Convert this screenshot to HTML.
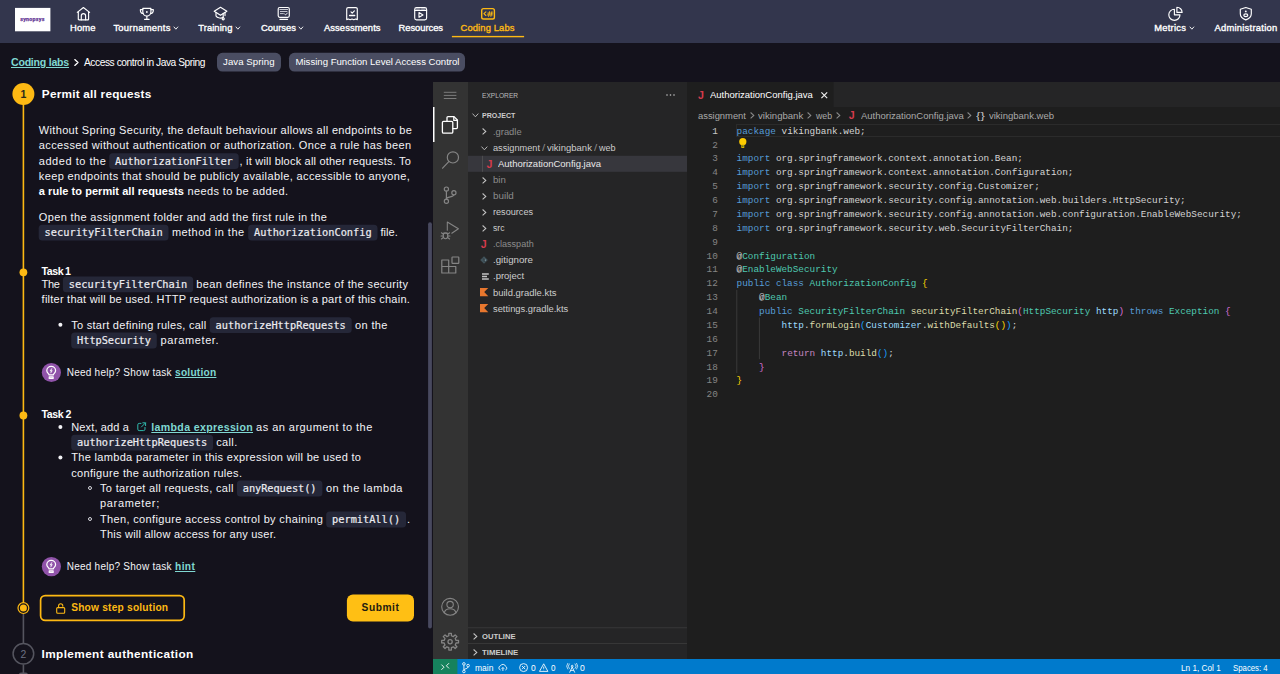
<!DOCTYPE html>
<html lang="en"><head><meta charset="utf-8"><title>Coding Labs - Access control in Java Spring</title>
<style>
html,body{margin:0;padding:0;}
html{overflow:hidden;width:1280px;height:674px;}
body{width:1280px;height:674px;overflow:hidden;background:#14121c;position:relative;font-family:"Liberation Sans",sans-serif;}
.b{position:absolute;box-sizing:border-box;}
.t{position:absolute;white-space:pre;margin:0;padding:0;}
svg{position:absolute;overflow:visible;}
</style></head><body>
<svg style="left:-1px;top:-1px" width="1282" height="45" viewBox="-1 -1 1282 45"><rect x="0" y="0" width="1280" height="43" fill="#33364d"/></svg>
<svg style="left:14px;top:6px" width="38" height="27" viewBox="14 6 38 27"><rect x="15" y="7.9" width="35.4" height="23.4" fill="#ffffff"/></svg>
<span class="t" id="t0" style='left:20.2px;top:16.20px;font:700 4.9px/7px "Liberation Sans", sans-serif;color:#5d2d91;letter-spacing:0.234px;-webkit-text-stroke:0.25px #5d2d91;'>synopsys</span>
<svg style="left:0;top:0" width="1280" height="44" viewBox="0 0 1280 44" fill="none" stroke="#ffffff" stroke-width="1.15" stroke-linecap="round" stroke-linejoin="round"><path d="M77.3 12.4 L83.4 7.5 L89.6 12.4"/><path d="M78.3 11.8 V19.2 A0.7 0.7 0 0 0 79 19.9 H87.9 A0.7 0.7 0 0 0 88.6 19.2 V11.8"/><path d="M81.3 19.8 V15.8 A2.15 2.15 0 0 1 85.6 15.8 V19.8"/></svg>
<svg style="left:0;top:0" width="1280" height="44" viewBox="0 0 1280 44" fill="none" stroke="#ffffff" stroke-width="1.15" stroke-linecap="round" stroke-linejoin="round"><path d="M142.8 8.3 H150.9 V12 A4.05 4.05 0 0 1 142.8 12 Z"/><path d="M142.8 9.6 H140.4 V10.8 A2.6 2.6 0 0 0 143.2 13.4"/><path d="M150.9 9.6 H153.3 V10.8 A2.6 2.6 0 0 1 150.5 13.4"/><path d="M146.85 16.2 V19"/><path d="M144.6 19.4 H149.1"/><circle cx="146.85" cy="12" r="0.9" fill="#fff" stroke="none"/></svg>
<svg style="left:0;top:0" width="1280" height="44" viewBox="0 0 1280 44" fill="none" stroke="#ffffff" stroke-width="1.15" stroke-linecap="round" stroke-linejoin="round"><path d="M214.2 11.3 L220.5 7.3 L226.9 11.3 L220.5 15.3 Z"/><path d="M216 12.6 V16 C217 18.2 222 18.8 223.2 17.2"/><path d="M225 12.6 V15.6"/><path d="M223.2 13.4 V17.6"/><circle cx="223.2" cy="18.8" r="1.05"/></svg>
<svg style="left:0;top:0" width="1280" height="44" viewBox="0 0 1280 44" fill="none" stroke="#ffffff" stroke-width="1.15" stroke-linecap="round" stroke-linejoin="round"><rect x="278.2" y="7.5" width="11.1" height="9.8" rx="1.5"/><path d="M279.8 9.5 H287.6 M280.4 11.5 H287 M280.4 13.6 H283.4" stroke-width="0.9" stroke="#d5d6de"/><path d="M284.6 14 L285.6 14.9 L287.4 13" stroke-width="0.9"/><path d="M279.9 19.3 H287.6"/></svg>
<svg style="left:0;top:0" width="1280" height="44" viewBox="0 0 1280 44" fill="none" stroke="#ffffff" stroke-width="1.15" stroke-linecap="round" stroke-linejoin="round"><path d="M346.7 19.6 V9 A1.4 1.4 0 0 1 348.1 7.6 H355.9 A1.4 1.4 0 0 1 357.3 9 V19.6 L355.6 19 L353.8 19.7 L352 19 L350.2 19.7 L348.4 19 Z"/><path d="M351 11.9 L352.2 13.1 L354.4 10.9"/><path d="M349.6 15.6 H354.6" stroke-width="1.5"/></svg>
<svg style="left:0;top:0" width="1280" height="44" viewBox="0 0 1280 44" fill="none" stroke="#ffffff" stroke-width="1.15" stroke-linecap="round" stroke-linejoin="round"><rect x="414.7" y="7.6" width="11.9" height="12.2" rx="1.8"/><path d="M414.7 10.3 H426.6"/><path d="M419 12.5 L423 14.9 L419 17.3 Z"/><path d="M416.4 9 H419.4 M421.6 9 H424.6" stroke="#b8bac6" stroke-width="0.9"/></svg>
<svg style="left:0;top:0" width="1280" height="44" viewBox="0 0 1280 44" fill="none" stroke="#fdb913" stroke-width="1.4" stroke-linecap="round" stroke-linejoin="round"><rect x="481.7" y="8.6" width="12.7" height="10.4" rx="1.8"/></svg>
<svg style="left:0;top:0" width="1280" height="44" viewBox="0 0 1280 44" fill="none" stroke="#fdb913" stroke-width="1.1" stroke-linecap="round" stroke-linejoin="round"><path d="M485.9 11.9 L483.9 13.7 L485.9 15.5"/><path d="M489.6 11.6 L488.6 16.4 M491.9 11.6 L490.9 16.4 M487.8 13.1 H492.8 M487.4 14.9 H492.4" stroke-width="0.9"/></svg>
<svg style="left:0;top:0" width="1280" height="44" viewBox="0 0 1280 44" fill="none" stroke="#ffffff" stroke-width="1.15" stroke-linecap="round" stroke-linejoin="round"><path d="M1174.4 9.2 A5.6 5.6 0 1 0 1180 14.8 H1174.4 Z"/><path d="M1176.9 7.2 A5.2 5.2 0 0 1 1182.1 12.4 H1176.9 Z"/></svg>
<svg style="left:0;top:0" width="1280" height="44" viewBox="0 0 1280 44" fill="none" stroke="#ffffff" stroke-width="1.15" stroke-linecap="round" stroke-linejoin="round"><path d="M1245.8 7.5 L1251.3 9.3 V13.8 C1251.3 16.8 1248.6 18.9 1245.8 19.9 C1243 18.9 1240.3 16.8 1240.3 13.8 V9.3 Z"/><circle cx="1245.8" cy="11.4" r="0.95" fill="#fff" stroke="none"/><ellipse cx="1245.8" cy="15.2" rx="2" ry="1.35"/></svg>
<span class="t" id="t1" style='left:70px;top:21.41px;font:400 9.4px/13px "Liberation Sans", sans-serif;color:#ffffff;letter-spacing:0.161px;-webkit-text-stroke:0.35px #ffffff;'>Home</span>
<span class="t" id="t2" style='left:113.4px;top:21.41px;font:400 9.4px/13px "Liberation Sans", sans-serif;color:#ffffff;letter-spacing:0.280px;-webkit-text-stroke:0.35px #ffffff;'>Tournaments</span>
<svg style="left:173.5px;top:27.4px" width="3.8" height="2.2" viewBox="0 0 3.8 2.2"><path d="M0 0 L1.9 2.2 L3.8 0" fill="none" stroke="#ffffff" stroke-width="0.9" stroke-linecap="round" stroke-linejoin="round"/></svg>
<span class="t" id="t3" style='left:198.2px;top:21.41px;font:400 9.4px/13px "Liberation Sans", sans-serif;color:#ffffff;letter-spacing:0.096px;-webkit-text-stroke:0.35px #ffffff;'>Training</span>
<svg style="left:236.4px;top:27.4px" width="3.8" height="2.2" viewBox="0 0 3.8 2.2"><path d="M0 0 L1.9 2.2 L3.8 0" fill="none" stroke="#ffffff" stroke-width="0.9" stroke-linecap="round" stroke-linejoin="round"/></svg>
<span class="t" id="t4" style='left:261px;top:21.41px;font:400 9.4px/13px "Liberation Sans", sans-serif;color:#ffffff;letter-spacing:0.013px;-webkit-text-stroke:0.35px #ffffff;'>Courses</span>
<svg style="left:299.2px;top:27.4px" width="3.8" height="2.2" viewBox="0 0 3.8 2.2"><path d="M0 0 L1.9 2.2 L3.8 0" fill="none" stroke="#ffffff" stroke-width="0.9" stroke-linecap="round" stroke-linejoin="round"/></svg>
<span class="t" id="t5" style='left:324px;top:21.41px;font:400 9.4px/13px "Liberation Sans", sans-serif;color:#ffffff;letter-spacing:0.075px;-webkit-text-stroke:0.35px #ffffff;'>Assessments</span>
<span class="t" id="t6" style='left:398.5px;top:21.41px;font:400 9.4px/13px "Liberation Sans", sans-serif;color:#ffffff;letter-spacing:-0.039px;-webkit-text-stroke:0.35px #ffffff;'>Resources</span>
<span class="t" id="t7" style='left:460.5px;top:21.41px;font:400 9.4px/13px "Liberation Sans", sans-serif;color:#fdb913;letter-spacing:0.134px;-webkit-text-stroke:0.35px #fdb913;'>Coding Labs</span>
<svg style="left:450px;top:34px" width="76" height="5" viewBox="450 34 76 5"><rect x="451.9" y="35.9" width="72.2" height="1.4" fill="#fdb913"/></svg>
<span class="t" id="t8" style='left:1154.2px;top:21.41px;font:400 9.4px/13px "Liberation Sans", sans-serif;color:#ffffff;letter-spacing:0.264px;-webkit-text-stroke:0.35px #ffffff;'>Metrics</span>
<svg style="left:1189.8px;top:27.4px" width="3.8" height="2.2" viewBox="0 0 3.8 2.2"><path d="M0 0 L1.9 2.2 L3.8 0" fill="none" stroke="#ffffff" stroke-width="0.9" stroke-linecap="round" stroke-linejoin="round"/></svg>
<span class="t" id="t9" style='left:1214.4px;top:21.41px;font:400 9.4px/13px "Liberation Sans", sans-serif;color:#ffffff;letter-spacing:0.261px;-webkit-text-stroke:0.35px #ffffff;'>Administration</span>
<span class="t" id="t10" style='left:11px;top:54.61px;font:700 10.6px/15px "Liberation Sans", sans-serif;color:#80d8d2;letter-spacing:-0.242px;text-decoration:underline;text-decoration-thickness:1px;text-underline-offset:0.6px;'>Coding labs</span>
<svg style="left:74.3px;top:58.8px" width="5" height="7" viewBox="0 0 5 7"><path d="M0.8 0.6 L4 3.5 L0.8 6.4" fill="none" stroke="#fff" stroke-width="1.3" stroke-linecap="round" stroke-linejoin="round"/></svg>
<span class="t" id="t11" style='left:84px;top:55.61px;font:400 10.2px/14px "Liberation Sans", sans-serif;color:#ffffff;letter-spacing:-0.434px;'>Access control in Java Spring</span>
<svg style="left:216px;top:51px" width="66" height="22" viewBox="216 51 66 22"><rect x="217" y="52.8" width="64" height="18.7" rx="5.5" fill="#4a4d62"/></svg>
<span class="t" id="t12" style='left:223px;top:55.41px;font:400 9.6px/13px "Liberation Sans", sans-serif;color:#ffffff;letter-spacing:0.083px;'>Java Spring</span>
<svg style="left:288px;top:51px" width="178" height="22" viewBox="288 51 178 22"><rect x="289" y="52.8" width="176" height="18.7" rx="5.5" fill="#4a4d62"/></svg>
<span class="t" id="t13" style='left:295.5px;top:55.41px;font:400 9.6px/13px "Liberation Sans", sans-serif;color:#ffffff;letter-spacing:-0.007px;'>Missing Function Level Access Control</span>
<svg style="left:21px;top:93px" width="5" height="511" viewBox="21 93 5 511"><rect x="22.6" y="94" width="1.6" height="509" fill="#fdb913"/></svg>
<svg style="left:21px;top:612px" width="5" height="33" viewBox="21 612 5 33"><rect x="22.6" y="613.5" width="1.6" height="30" fill="#55555f"/></svg>
<svg style="left:21px;top:663px" width="5" height="12" viewBox="21 663 5 12"><rect x="22.6" y="664.5" width="1.6" height="9.5" fill="#55555f"/></svg>
<svg style="left:17px;top:671px" width="13" height="9" viewBox="17 671 13 9"><rect x="18.6" y="672.6" width="9.6" height="6" rx="3" fill="#55555f"/></svg>
<svg style="left:11px;top:82px" width="25" height="24" viewBox="11 82 25 24"><rect x="12.4" y="83" width="22" height="22" rx="11" fill="#fdb913"/></svg>
<span class="t" id="t14" style='left:20.6px;top:87.00px;font:700 10.5px/15px "Liberation Sans", sans-serif;color:#2a2a1a;'>1</span>
<span class="t" id="t15" style='left:41.8px;top:86.20px;font:700 11.8px/17px "Liberation Sans", sans-serif;color:#ffffff;letter-spacing:0.219px;'>Permit all requests</span>
<span class="t" id="t16" style='left:38.8px;top:123.11px;font:400 11.0px/15px "Liberation Sans", sans-serif;color:#f3f3f6;letter-spacing:0.334px;'>Without Spring Security, the default behaviour allows all endpoints to be</span>
<span class="t" id="t17" style='left:38.8px;top:138.41px;font:400 11.0px/15px "Liberation Sans", sans-serif;color:#f3f3f6;letter-spacing:0.380px;'>accessed without authentication or authorization. Once a rule has been</span>
<span class="t" id="t18" style='left:38.8px;top:153.61px;font:400 11.0px/15px "Liberation Sans", sans-serif;color:#f3f3f6;letter-spacing:0.539px;'>added to the</span>
<svg style="left:108px;top:152px" width="132" height="19" viewBox="108 152 132 19"><rect x="109.2" y="153.2" width="129.5" height="15.9" rx="3.5" fill="#252738"/></svg>
<span class="t" id="t19" style='left:115.10000000000001px;top:153.50px;font:400 10.3px/14px "DejaVu Sans Mono", "Liberation Mono", monospace;color:#ececf1;letter-spacing:-0.005px;-webkit-text-stroke:0.2px #ececf1;'>AuthorizationFilter</span>
<span class="t" id="t20" style='left:239.6px;top:153.61px;font:400 11.0px/15px "Liberation Sans", sans-serif;color:#f3f3f6;letter-spacing:0.204px;'>, it will block all other requests. To</span>
<span class="t" id="t21" style='left:38.8px;top:168.91px;font:400 11.0px/15px "Liberation Sans", sans-serif;color:#f3f3f6;letter-spacing:0.373px;'>keep endpoints that should be publicly available, accessible to anyone,</span>
<span class="t" id="t22" style='left:38.8px;top:184.31px;font:700 11.0px/15px "Liberation Sans", sans-serif;color:#ffffff;letter-spacing:0.052px;'>a rule to permit all requests</span>
<span class="t" id="t23" style='left:187.4px;top:184.31px;font:400 11.0px/15px "Liberation Sans", sans-serif;color:#f3f3f6;letter-spacing:0.382px;'>needs to be added.</span>
<span class="t" id="t24" style='left:38.8px;top:209.91px;font:400 11.0px/15px "Liberation Sans", sans-serif;color:#f3f3f6;letter-spacing:0.357px;'>Open the assignment folder and add the first rule in the</span>
<svg style="left:37px;top:223px" width="133" height="19" viewBox="37 223 133 19"><rect x="38.7" y="224.7" width="129.8" height="15.9" rx="3.5" fill="#252738"/></svg>
<span class="t" id="t25" style='left:44.6px;top:225.00px;font:400 10.3px/14px "DejaVu Sans Mono", "Liberation Mono", monospace;color:#ececf1;letter-spacing:0.011px;-webkit-text-stroke:0.2px #ececf1;'>securityFilterChain</span>
<span class="t" id="t26" style='left:171.9px;top:225.11px;font:400 11.0px/15px "Liberation Sans", sans-serif;color:#f3f3f6;letter-spacing:0.462px;'>method in the</span>
<svg style="left:247px;top:223px" width="132" height="19" viewBox="247 223 132 19"><rect x="248.2" y="224.7" width="129.3" height="15.9" rx="3.5" fill="#252738"/></svg>
<span class="t" id="t27" style='left:254.1px;top:225.00px;font:400 10.3px/14px "DejaVu Sans Mono", "Liberation Mono", monospace;color:#ececf1;letter-spacing:-0.016px;-webkit-text-stroke:0.2px #ececf1;'>AuthorizationConfig</span>
<span class="t" id="t28" style='left:380.5px;top:225.11px;font:400 11.0px/15px "Liberation Sans", sans-serif;color:#f3f3f6;letter-spacing:0.019px;'>file.</span>
<svg style="left:18px;top:267px" width="11" height="11" viewBox="18 267 11 11"><rect x="19.5" y="268.4" width="7.8" height="7.8" rx="3.9" fill="#fdb913"/></svg>
<span class="t" id="t29" style='left:41.6px;top:263.91px;font:700 10.6px/15px "Liberation Sans", sans-serif;color:#ffffff;letter-spacing:-0.458px;'>Task</span>
<span class="t" id="t30" style='left:65.0px;top:263.91px;font:700 10.6px/15px "Liberation Sans", sans-serif;color:#ffffff;'>1</span>
<span class="t" id="t31" style='left:41.6px;top:276.81px;font:400 11.0px/15px "Liberation Sans", sans-serif;color:#f3f3f6;letter-spacing:-0.384px;'>The</span>
<svg style="left:61px;top:275px" width="134" height="19" viewBox="61 275 134 19"><rect x="62.9" y="276.4" width="130.3" height="15.9" rx="3.5" fill="#252738"/></svg>
<span class="t" id="t32" style='left:68.8px;top:276.71px;font:400 10.3px/14px "DejaVu Sans Mono", "Liberation Mono", monospace;color:#ececf1;letter-spacing:0.039px;-webkit-text-stroke:0.2px #ececf1;'>securityFilterChain</span>
<span class="t" id="t33" style='left:196.3px;top:276.81px;font:400 11.0px/15px "Liberation Sans", sans-serif;color:#f3f3f6;letter-spacing:0.370px;'>bean defines the instance of the security</span>
<span class="t" id="t34" style='left:41.6px;top:292.00px;font:400 11.0px/15px "Liberation Sans", sans-serif;color:#f3f3f6;letter-spacing:0.238px;'>filter that will be used. HTTP request authorization is a part of this chain.</span>
<svg style="left:57px;top:321px" width="7" height="7" viewBox="57 321 7 7"><rect x="58.4" y="322.8" width="4" height="4" rx="2" fill="#f3f3f6"/></svg>
<span class="t" id="t35" style='left:71.2px;top:317.61px;font:400 11.0px/15px "Liberation Sans", sans-serif;color:#f3f3f6;letter-spacing:0.283px;'>To start defining rules, call</span>
<svg style="left:208px;top:316px" width="145" height="19" viewBox="208 316 145 19"><rect x="209.7" y="317.2" width="142" height="15.9" rx="3.5" fill="#252738"/></svg>
<span class="t" id="t36" style='left:215.6px;top:317.50px;font:400 10.3px/14px "DejaVu Sans Mono", "Liberation Mono", monospace;color:#ececf1;letter-spacing:0.001px;-webkit-text-stroke:0.2px #ececf1;'>authorizeHttpRequests</span>
<span class="t" id="t37" style='left:355.1px;top:317.61px;font:400 11.0px/15px "Liberation Sans", sans-serif;color:#f3f3f6;letter-spacing:0.341px;'>on the</span>
<svg style="left:70px;top:331px" width="88" height="19" viewBox="70 331 88 19"><rect x="71.2" y="332.5" width="85.6" height="15.9" rx="3.5" fill="#252738"/></svg>
<span class="t" id="t38" style='left:77.10000000000001px;top:332.81px;font:400 10.3px/14px "DejaVu Sans Mono", "Liberation Mono", monospace;color:#ececf1;letter-spacing:-0.055px;-webkit-text-stroke:0.2px #ececf1;'>HttpSecurity</span>
<span class="t" id="t39" style='left:160.5px;top:332.91px;font:400 11.0px/15px "Liberation Sans", sans-serif;color:#f3f3f6;letter-spacing:0.612px;'>parameter.</span>
<svg style="left:40px;top:361px" width="22" height="23" viewBox="40 361 22 23"><rect x="41.8" y="362.9" width="19.2" height="19.2" rx="9.6" fill="#9053a9"/></svg>
<svg style="left:46.1px;top:365.9px" width="10.4" height="13.2" viewBox="0 0 10.4 13.2" fill="none" stroke="#fff" stroke-width="1.25" stroke-linecap="round" stroke-linejoin="round"><path d="M3.1 9 C3.1 7.6 0.8 6.9 0.8 4.7 A4.4 4.4 0 0 1 9.6 4.7 C9.6 6.9 7.3 7.6 7.3 9 Z"/><path d="M3.2 10.9 H7.2 V12.4 H3.2 Z" stroke-width="1.1"/><path d="M5.7 2.6 L4 5.1 H5.2 L4.7 7.2 L6.4 4.6 H5.2 Z" fill="#fff" stroke-width="0.4"/></svg>
<span class="t" id="t40" style='left:66.7px;top:365.81px;font:400 10.0px/14px "Liberation Sans", sans-serif;color:#f3f3f6;letter-spacing:0.249px;'>Need help? Show task</span>
<span class="t" id="t41" style='left:175px;top:365.80px;font:700 10.2px/14px "Liberation Sans", sans-serif;color:#80d8d2;letter-spacing:0.225px;text-decoration:underline;text-decoration-thickness:1px;text-underline-offset:0.6px;'>solution</span>
<svg style="left:18px;top:410px" width="11" height="11" viewBox="18 410 11 11"><rect x="19.5" y="411.6" width="7.8" height="7.8" rx="3.9" fill="#fdb913"/></svg>
<span class="t" id="t42" style='left:41.6px;top:407.00px;font:700 10.6px/15px "Liberation Sans", sans-serif;color:#ffffff;letter-spacing:-0.458px;'>Task</span>
<span class="t" id="t43" style='left:65.6px;top:407.00px;font:700 10.6px/15px "Liberation Sans", sans-serif;color:#ffffff;'>2</span>
<svg style="left:57px;top:424px" width="7" height="6" viewBox="57 424 7 6"><rect x="58.4" y="425" width="4" height="4" rx="2" fill="#f3f3f6"/></svg>
<span class="t" id="t44" style='left:71.2px;top:419.91px;font:400 11.0px/15px "Liberation Sans", sans-serif;color:#f3f3f6;letter-spacing:0.143px;'>Next, add a</span>
<svg style="left:136.6px;top:422.4px" width="9.4" height="9.4" viewBox="0 0 9.4 9.4" fill="none" stroke="#2fb8ac" stroke-width="1" stroke-linecap="round" stroke-linejoin="round"><path d="M4 1.4 H2.2 A1.4 1.4 0 0 0 0.8 2.8 V7.2 A1.4 1.4 0 0 0 2.2 8.6 H6.6 A1.4 1.4 0 0 0 8 7.2 V5.4"/><path d="M5.8 0.8 H8.6 V3.6"/><path d="M8.4 1 L4.4 5"/></svg>
<span class="t" id="t45" style='left:151.3px;top:419.91px;font:700 10.6px/15px "Liberation Sans", sans-serif;color:#80d8d2;letter-spacing:0.338px;text-decoration:underline;text-decoration-thickness:1px;text-underline-offset:0.6px;'>lambda expression</span>
<span class="t" id="t46" style='left:256.1px;top:419.91px;font:400 11.0px/15px "Liberation Sans", sans-serif;color:#f3f3f6;letter-spacing:0.459px;'>as an argument to the</span>
<svg style="left:70px;top:433px" width="145" height="19" viewBox="70 433 145 19"><rect x="71.2" y="434.7" width="141.9" height="15.9" rx="3.5" fill="#252738"/></svg>
<span class="t" id="t47" style='left:77.10000000000001px;top:435.00px;font:400 10.3px/14px "DejaVu Sans Mono", "Liberation Mono", monospace;color:#ececf1;letter-spacing:-0.004px;-webkit-text-stroke:0.2px #ececf1;'>authorizeHttpRequests</span>
<span class="t" id="t48" style='left:216.2px;top:435.11px;font:400 11.0px/15px "Liberation Sans", sans-serif;color:#f3f3f6;letter-spacing:0.359px;'>call.</span>
<svg style="left:57px;top:454px" width="7" height="7" viewBox="57 454 7 7"><rect x="58.4" y="455.6" width="4" height="4" rx="2" fill="#f3f3f6"/></svg>
<span class="t" id="t49" style='left:71.2px;top:450.41px;font:400 11.0px/15px "Liberation Sans", sans-serif;color:#f3f3f6;letter-spacing:0.328px;'>The lambda parameter in this expression will be used to</span>
<span class="t" id="t50" style='left:71.2px;top:465.61px;font:400 11.0px/15px "Liberation Sans", sans-serif;color:#f3f3f6;letter-spacing:0.339px;'>configure the authorization rules.</span>
<div class="b" style="left:87.8px;top:485.8px;width:4.2px;height:4.2px;border-radius:50%;border:1px solid #d8d8de;"></div>
<span class="t" id="t51" style='left:100px;top:481.00px;font:400 11.0px/15px "Liberation Sans", sans-serif;color:#f3f3f6;letter-spacing:0.321px;'>To target all requests, call</span>
<svg style="left:235px;top:479px" width="89" height="19" viewBox="235 479 89 19"><rect x="236.9" y="480.6" width="85.5" height="15.9" rx="3.5" fill="#252738"/></svg>
<span class="t" id="t52" style='left:242.8px;top:480.91px;font:400 10.3px/14px "DejaVu Sans Mono", "Liberation Mono", monospace;color:#ececf1;letter-spacing:-0.064px;-webkit-text-stroke:0.2px #ececf1;'>anyRequest()</span>
<span class="t" id="t53" style='left:325.9px;top:481.00px;font:400 11.0px/15px "Liberation Sans", sans-serif;color:#f3f3f6;letter-spacing:0.573px;'>on the lambda</span>
<span class="t" id="t54" style='left:100px;top:496.41px;font:400 11.0px/15px "Liberation Sans", sans-serif;color:#f3f3f6;letter-spacing:0.666px;'>parameter;</span>
<div class="b" style="left:87.8px;top:516.6px;width:4.2px;height:4.2px;border-radius:50%;border:1px solid #d8d8de;"></div>
<span class="t" id="t55" style='left:100px;top:511.91px;font:400 11.0px/15px "Liberation Sans", sans-serif;color:#f3f3f6;letter-spacing:0.348px;'>Then, configure access control by chaining</span>
<svg style="left:325px;top:510px" width="82" height="19" viewBox="325 510 82 19"><rect x="326.2" y="511.5" width="79.8" height="15.9" rx="3.5" fill="#252738"/></svg>
<span class="t" id="t56" style='left:332.09999999999997px;top:511.81px;font:400 10.3px/14px "DejaVu Sans Mono", "Liberation Mono", monospace;color:#ececf1;letter-spacing:-0.020px;-webkit-text-stroke:0.2px #ececf1;'>permitAll()</span>
<span class="t" id="t57" style='left:406.9px;top:511.91px;font:400 11.0px/15px "Liberation Sans", sans-serif;color:#f3f3f6;'>.</span>
<span class="t" id="t58" style='left:100px;top:527.11px;font:400 11.0px/15px "Liberation Sans", sans-serif;color:#f3f3f6;letter-spacing:0.225px;'>This will allow access for any user.</span>
<svg style="left:40px;top:556px" width="22" height="22" viewBox="40 556 22 22"><rect x="41.8" y="557" width="19.2" height="19.2" rx="9.6" fill="#9053a9"/></svg>
<svg style="left:46.1px;top:560.0px" width="10.4" height="13.2" viewBox="0 0 10.4 13.2" fill="none" stroke="#fff" stroke-width="1.25" stroke-linecap="round" stroke-linejoin="round"><path d="M3.1 9 C3.1 7.6 0.8 6.9 0.8 4.7 A4.4 4.4 0 0 1 9.6 4.7 C9.6 6.9 7.3 7.6 7.3 9 Z"/><path d="M3.2 10.9 H7.2 V12.4 H3.2 Z" stroke-width="1.1"/><path d="M5.7 2.6 L4 5.1 H5.2 L4.7 7.2 L6.4 4.6 H5.2 Z" fill="#fff" stroke-width="0.4"/></svg>
<span class="t" id="t59" style='left:66.7px;top:559.91px;font:400 10.0px/14px "Liberation Sans", sans-serif;color:#f3f3f6;letter-spacing:0.249px;'>Need help? Show task</span>
<span class="t" id="t60" style='left:175px;top:559.91px;font:700 10.2px/14px "Liberation Sans", sans-serif;color:#80d8d2;letter-spacing:0.409px;text-decoration:underline;text-decoration-thickness:1px;text-underline-offset:0.6px;'>hint</span>
<svg style="left:0;top:590px" width="60" height="84" viewBox="0 590 60 84" fill="none"><circle cx="23.4" cy="608.1" r="5.4" stroke="#fdb913" stroke-width="1.2" fill="#14121c"/><circle cx="23.4" cy="653.8" r="10.3" stroke="#55555f" stroke-width="1.5"/></svg>
<svg style="left:18px;top:603px" width="10" height="10" viewBox="18 603 10 10"><rect x="19.9" y="604.6" width="7" height="7" rx="3.5" fill="#fdb913"/></svg>
<svg style="left:0;top:590px" width="200" height="84" viewBox="0 590 200 84" fill="none"><rect x="40.6" y="595.6" width="143.6" height="24.8" rx="4.6" stroke="#fdb913" stroke-width="1.7"/></svg>
<svg style="left:56px;top:602.6px" width="9.4" height="11" viewBox="0 0 9.4 11" fill="none" stroke="#fdb913" stroke-width="1.1" stroke-linecap="round" stroke-linejoin="round"><rect x="0.7" y="4.6" width="8" height="5.7" rx="1"/><path d="M2.6 4.6 V2.8 A2.1 2.1 0 0 1 6.8 2.8 V3.2"/></svg>
<span class="t" id="t61" style='left:71.2px;top:601.21px;font:700 10.2px/14px "Liberation Sans", sans-serif;color:#fdb913;letter-spacing:0.206px;'>Show step solution</span>
<svg style="left:345px;top:593px" width="70" height="30" viewBox="345 593 70 30"><rect x="346.9" y="594.6" width="67.1" height="27" rx="6" fill="#ffbf14"/></svg>
<span class="t" id="t62" style='left:361.6px;top:601.21px;font:700 10.2px/14px "Liberation Sans", sans-serif;color:#1d1a10;letter-spacing:0.534px;'>Submit</span>
<span class="t" id="t63" style='left:20.5px;top:646.60px;font:400 10.4px/15px "Liberation Sans", sans-serif;color:#6d7184;'>2</span>
<span class="t" id="t64" style='left:41.6px;top:645.81px;font:700 11.8px/17px "Liberation Sans", sans-serif;color:#ffffff;letter-spacing:0.379px;'>Implement authentication</span>
<svg style="left:427px;top:221px" width="6" height="409" viewBox="427 221 6 409"><rect x="428.1" y="222.3" width="3.8" height="406.3" rx="2" fill="#48495f"/></svg>
<svg style="left:432px;top:81px" width="37" height="594" viewBox="432 81 37 594"><rect x="433" y="82" width="35" height="592" fill="#333333"/></svg>
<svg style="left:467px;top:81px" width="221" height="594" viewBox="467 81 221 594"><rect x="468" y="82" width="219" height="592" fill="#252526"/></svg>
<svg style="left:686px;top:81px" width="595" height="594" viewBox="686 81 595 594"><rect x="687" y="82" width="593" height="592" fill="#1e1e1e"/></svg>
<svg style="left:686px;top:81px" width="595" height="27" viewBox="686 81 595 27"><rect x="687" y="82" width="593" height="25" fill="#252526"/></svg>
<svg style="left:686px;top:81px" width="149" height="27" viewBox="686 81 149 27"><rect x="687" y="82" width="146.6" height="25" fill="#1e1e1e"/></svg>
<svg style="left:432px;top:106px" width="4" height="37" viewBox="432 106 4 37"><rect x="433" y="107" width="1.5" height="35" fill="#ffffff"/></svg>
<svg style="left:0;top:0" width="1280" height="674" viewBox="0 0 1280 674" fill="none" stroke="#8e8e8e" stroke-width="0.8" stroke-linecap="round" stroke-linejoin="round" ><path d="M444.2 92.3 H456 M444.2 95.4 H456 M444.2 98.5 H456"/></svg>
<svg style="left:0;top:0" width="1280" height="674" viewBox="0 0 1280 674" fill="none" stroke="#ffffff" stroke-width="1.3" stroke-linecap="round" stroke-linejoin="round" ><path d="M447 121 V117.6 A1 1 0 0 1 448 116.6 H454 L457.4 120 V127.6 A1 1 0 0 1 456.4 128.6 H453"/><path d="M453.8 116.8 V120.4 H457.2"/><rect x="442.4" y="121.4" width="10.4" height="11.8" rx="1.2"/></svg>
<svg style="left:0;top:0" width="1280" height="674" viewBox="0 0 1280 674" fill="none" stroke="#858585" stroke-width="1.2" stroke-linecap="round" stroke-linejoin="round" ><circle cx="452.9" cy="157.4" r="5.6"/><path d="M448.8 161.6 L442.6 168.2"/></svg>
<svg style="left:0;top:0" width="1280" height="674" viewBox="0 0 1280 674" fill="none" stroke="#858585" stroke-width="1.2" stroke-linecap="round" stroke-linejoin="round" ><circle cx="446.4" cy="189.1" r="2.1"/><circle cx="446.4" cy="201.2" r="2.1"/><circle cx="453.9" cy="192.7" r="2.1"/><path d="M446.4 191.2 V199.1"/><path d="M453.9 194.8 C453.9 197.6 446.4 196 446.4 199.1"/></svg>
<svg style="left:0;top:0" width="1280" height="674" viewBox="0 0 1280 674" fill="none" stroke="#858585" stroke-width="1.05" stroke-linecap="round" stroke-linejoin="round" ><path d="M447.3 230.2 V222 L458.4 228.7 L451.8 233.2"/><ellipse cx="445.5" cy="235.8" rx="2.3" ry="2.9"/><path d="M443.6 232.9 H447.4 M441 235.9 H443.2 M447.8 235.9 H450 M441.4 232.8 L443.4 234.2 M449.6 232.8 L447.6 234.2 M441.4 239 L443.4 237.5 M449.6 239 L447.6 237.5"/></svg>
<svg style="left:0;top:0" width="1280" height="674" viewBox="0 0 1280 674" fill="none" stroke="#858585" stroke-width="1.2" stroke-linecap="round" stroke-linejoin="round" ><path d="M441.8 260 H448.7 V266.5 H455.8 V273 H441.8 Z M441.8 266.5 H448.7 V273"/><rect x="452" y="257" width="6.8" height="6.4" rx="0.6"/></svg>
<svg style="left:0;top:0" width="1280" height="674" viewBox="0 0 1280 674" fill="none" stroke="#858585" stroke-width="1.1" stroke-linecap="round" stroke-linejoin="round" ><circle cx="450.1" cy="606.8" r="8.4"/><circle cx="450.1" cy="604.6" r="3.2"/><path d="M444.3 612.6 C445.2 609.6 447.6 608.8 450.1 608.8 C452.6 608.8 455 609.6 455.9 612.6"/></svg>
<svg style="left:0;top:0" width="1280" height="674" viewBox="0 0 1280 674" fill="none" stroke="#858585" stroke-width="1.3" stroke-linecap="round" stroke-linejoin="round" ><path d="M448.84 633.29 L451.36 633.29 L451.38 635.74 L453.41 636.58 L455.15 634.86 L456.94 636.65 L455.22 638.39 L456.06 640.42 L458.51 640.44 L458.51 642.96 L456.06 642.98 L455.22 645.01 L456.94 646.75 L455.15 648.54 L453.41 646.82 L451.38 647.66 L451.36 650.11 L448.84 650.11 L448.82 647.66 L446.79 646.82 L445.05 648.54 L443.26 646.75 L444.98 645.01 L444.14 642.98 L441.69 642.96 L441.69 640.44 L444.14 640.42 L444.98 638.39 L443.26 636.65 L445.05 634.86 L446.79 636.58 L448.82 635.74 Z"/><circle cx="450.1" cy="641.7" r="2.1"/></svg>
<span class="t" id="t65" style='left:482.4px;top:89.91px;font:400 8.1px/11px "Liberation Sans", sans-serif;color:#bbbbbb;transform-origin:0 50%;transform:scaleX(0.8187);'>EXPLORER</span>
<svg style="left:665.8px;top:94px" width="9" height="2" viewBox="0 0 9 2" fill="#c5c5c5"><circle cx="1" cy="1" r="0.8"/><circle cx="4.5" cy="1" r="0.8"/><circle cx="8" cy="1" r="0.8"/></svg>
<svg style="left:471.8px;top:113.1px" width="6.8" height="4.4" viewBox="0 0 6.8 4.4"><path d="M0.5 0.6 L3.4 3.8 L6.3 0.6" fill="none" stroke="#c5c5c5" stroke-width="0.9"/></svg>
<span class="t" id="t66" style='left:482.4px;top:110.21px;font:700 8.1px/11px "Liberation Sans", sans-serif;color:#cccccc;transform-origin:0 50%;transform:scaleX(0.8709);'>PROJECT</span>
<svg style="left:482.3px;top:128.29999999999998px" width="4.4" height="6.8" viewBox="0 0 4.4 6.8"><path d="M0.6 0.5 L3.8 3.4 L0.6 6.3" fill="none" stroke="#c5c5c5" stroke-width="1.05"/></svg>
<span class="t" id="t67" style='left:492.6px;top:124.80px;font:400 9.6px/13px "Liberation Sans", sans-serif;color:#8c8c8c;transform-origin:0 50%;transform:scaleX(0.9747);'>.gradle</span>
<svg style="left:481px;top:145.5px" width="6.8" height="4.4" viewBox="0 0 6.8 4.4"><path d="M0.5 0.6 L3.4 3.8 L6.3 0.6" fill="none" stroke="#c5c5c5" stroke-width="0.9"/></svg>
<span class="t" id="t68" style='left:492.6px;top:140.80px;font:400 9.6px/13px "Liberation Sans", sans-serif;color:#cccccc;transform-origin:0 50%;transform:scaleX(0.9580);'>assignment</span>
<span class="t" id="t69" style='left:542px;top:140.80px;font:400 9.6px/13px "Liberation Sans", sans-serif;color:#8a8a8a;transform-origin:0 50%;transform:scaleX(1.1977);'>/</span>
<span class="t" id="t70" style='left:547.1px;top:140.80px;font:400 9.6px/13px "Liberation Sans", sans-serif;color:#cccccc;transform-origin:0 50%;transform:scaleX(0.9902);'>vikingbank</span>
<span class="t" id="t71" style='left:594.3px;top:140.80px;font:400 9.6px/13px "Liberation Sans", sans-serif;color:#8a8a8a;transform-origin:0 50%;transform:scaleX(1.1977);'>/</span>
<span class="t" id="t72" style='left:599.4px;top:140.80px;font:400 9.6px/13px "Liberation Sans", sans-serif;color:#cccccc;transform-origin:0 50%;transform:scaleX(0.9427);'>web</span>
<svg style="left:467px;top:154px" width="221" height="19" viewBox="467 154 221 19"><rect x="468" y="155.8" width="219" height="16" fill="#37373d"/></svg>
<svg style="left:481px;top:154px" width="3" height="19" viewBox="481 154 3 19"><rect x="482.2" y="155.8" width="0.7" height="16" fill="#585858"/></svg>
<span class="t" id="t73" style='left:486.6px;top:156.81px;font:700 10.6px/15px "Liberation Sans", sans-serif;color:#d63b4c;'>J</span>
<span class="t" id="t74" style='left:498.4px;top:157.10px;font:400 9.6px/13px "Liberation Sans", sans-serif;color:#e8e8e8;transform-origin:0 50%;transform:scaleX(0.9904);'>AuthorizationConfig.java</span>
<svg style="left:482.3px;top:176.7px" width="4.4" height="6.8" viewBox="0 0 4.4 6.8"><path d="M0.6 0.5 L3.8 3.4 L0.6 6.3" fill="none" stroke="#c5c5c5" stroke-width="1.05"/></svg>
<span class="t" id="t75" style='left:492.6px;top:173.21px;font:400 9.6px/13px "Liberation Sans", sans-serif;color:#8c8c8c;transform-origin:0 50%;transform:scaleX(1.0068);'>bin</span>
<svg style="left:482.3px;top:192.7px" width="4.4" height="6.8" viewBox="0 0 4.4 6.8"><path d="M0.6 0.5 L3.8 3.4 L0.6 6.3" fill="none" stroke="#c5c5c5" stroke-width="1.05"/></svg>
<span class="t" id="t76" style='left:492.6px;top:189.21px;font:400 9.6px/13px "Liberation Sans", sans-serif;color:#8c8c8c;transform-origin:0 50%;transform:scaleX(1.0256);'>build</span>
<svg style="left:482.3px;top:208.79999999999998px" width="4.4" height="6.8" viewBox="0 0 4.4 6.8"><path d="M0.6 0.5 L3.8 3.4 L0.6 6.3" fill="none" stroke="#c5c5c5" stroke-width="1.05"/></svg>
<span class="t" id="t77" style='left:492.6px;top:205.30px;font:400 9.6px/13px "Liberation Sans", sans-serif;color:#cccccc;transform-origin:0 50%;transform:scaleX(0.9496);'>resources</span>
<svg style="left:482.3px;top:224.79999999999998px" width="4.4" height="6.8" viewBox="0 0 4.4 6.8"><path d="M0.6 0.5 L3.8 3.4 L0.6 6.3" fill="none" stroke="#c5c5c5" stroke-width="1.05"/></svg>
<span class="t" id="t78" style='left:492.6px;top:221.30px;font:400 9.6px/13px "Liberation Sans", sans-serif;color:#cccccc;transform-origin:0 50%;transform:scaleX(0.8987);'>src</span>
<span class="t" id="t79" style='left:480.8px;top:237.00px;font:700 10.6px/15px "Liberation Sans", sans-serif;color:#d63b4c;'>J</span>
<span class="t" id="t80" style='left:492.6px;top:237.30px;font:400 9.6px/13px "Liberation Sans", sans-serif;color:#8c8c8c;transform-origin:0 50%;transform:scaleX(0.9421);'>.classpath</span>
<svg style="left:479.6px;top:256.2px" width="8" height="8" viewBox="0 0 8 8"><path d="M4 0.2 L7.8 4 L4 7.8 L0.2 4 Z" fill="#41535b"/><path d="M3 2.4 L5.2 4.6 M4.2 3.6 V5.8" stroke="#2a3338" stroke-width="0.8" fill="none"/><circle cx="5.3" cy="4.1" r="0.7" fill="#9fb3bb"/></svg>
<span class="t" id="t81" style='left:492.6px;top:253.41px;font:400 9.6px/13px "Liberation Sans", sans-serif;color:#cccccc;transform-origin:0 50%;transform:scaleX(1.0135);'>.gitignore</span>
<svg style="left:481.7px;top:272.6px" width="7" height="7" viewBox="0 0 7 7" stroke="#c2c2c2" stroke-width="1.7"><path d="M0 1 H6.8 M0 3.5 H5 M0 6 H6.8"/></svg>
<span class="t" id="t82" style='left:492.6px;top:269.41px;font:400 9.6px/13px "Liberation Sans", sans-serif;color:#cccccc;transform-origin:0 50%;transform:scaleX(0.9883);'>.project</span>
<svg style="left:479.59999999999997px;top:288.20000000000005px" width="8.3" height="8.2" viewBox="0 0 8.3 8.2"><path d="M0 0 H8.3 L4.2 4.1 L8.3 8.2 H0 Z" fill="#e8772e"/></svg>
<span class="t" id="t83" style='left:492.6px;top:285.71px;font:400 9.6px/13px "Liberation Sans", sans-serif;color:#cccccc;transform-origin:0 50%;transform:scaleX(0.9840);'>build.gradle.kts</span>
<svg style="left:479.59999999999997px;top:304.1px" width="8.3" height="8.2" viewBox="0 0 8.3 8.2"><path d="M0 0 H8.3 L4.2 4.1 L8.3 8.2 H0 Z" fill="#e8772e"/></svg>
<span class="t" id="t84" style='left:492.6px;top:301.60px;font:400 9.6px/13px "Liberation Sans", sans-serif;color:#cccccc;transform-origin:0 50%;transform:scaleX(0.9738);'>settings.gradle.kts</span>
<svg style="left:467px;top:626px" width="221" height="4" viewBox="467 626 221 4"><rect x="468" y="627.4" width="219" height="0.8" fill="#3c3c3c"/></svg>
<svg style="left:472.6px;top:632.7px" width="4.4" height="6.8" viewBox="0 0 4.4 6.8"><path d="M0.6 0.5 L3.8 3.4 L0.6 6.3" fill="none" stroke="#c5c5c5" stroke-width="1.05"/></svg>
<span class="t" id="t85" style='left:482.3px;top:631.22px;font:700 8.1px/11px "Liberation Sans", sans-serif;color:#cccccc;transform-origin:0 50%;transform:scaleX(0.9456);'>OUTLINE</span>
<svg style="left:467px;top:642px" width="221" height="3" viewBox="467 642 221 3"><rect x="468" y="643.2" width="219" height="0.8" fill="#3c3c3c"/></svg>
<svg style="left:472.6px;top:648.8000000000001px" width="4.4" height="6.8" viewBox="0 0 4.4 6.8"><path d="M0.6 0.5 L3.8 3.4 L0.6 6.3" fill="none" stroke="#c5c5c5" stroke-width="1.05"/></svg>
<span class="t" id="t86" style='left:482.3px;top:647.31px;font:700 8.1px/11px "Liberation Sans", sans-serif;color:#cccccc;transform-origin:0 50%;transform:scaleX(0.9608);'>TIMELINE</span>
<span class="t" id="t87" style='left:698.0px;top:88.21px;font:700 10.6px/15px "Liberation Sans", sans-serif;color:#d63b4c;'>J</span>
<span class="t" id="t88" style='left:710.3px;top:88.41px;font:400 9.6px/13px "Liberation Sans", sans-serif;color:#ffffff;transform-origin:0 50%;transform:scaleX(0.9885);'>AuthorizationConfig.java</span>
<svg style="left:820.6px;top:92px" width="6.6" height="6.6" viewBox="0 0 6.6 6.6"><path d="M0.4 0.4 L6.2 6.2 M6.2 0.4 L0.4 6.2" stroke="#f0f0f0" stroke-width="1.15"/></svg>
<span class="t" id="t89" style='left:698.3px;top:108.71px;font:400 9.6px/13px "Liberation Sans", sans-serif;color:#a9a9a9;transform-origin:0 50%;transform:scaleX(0.9763);'>assignment</span>
<svg style="left:749.6px;top:112.39999999999999px" width="4.4" height="6.8" viewBox="0 0 4.4 6.8"><path d="M0.6 0.5 L3.8 3.4 L0.6 6.3" fill="none" stroke="#8a8a8a" stroke-width="1.05"/></svg>
<span class="t" id="t90" style='left:758.2px;top:108.71px;font:400 9.6px/13px "Liberation Sans", sans-serif;color:#a9a9a9;transform-origin:0 50%;transform:scaleX(0.9968);'>vikingbank</span>
<svg style="left:807.2px;top:112.39999999999999px" width="4.4" height="6.8" viewBox="0 0 4.4 6.8"><path d="M0.6 0.5 L3.8 3.4 L0.6 6.3" fill="none" stroke="#8a8a8a" stroke-width="1.05"/></svg>
<span class="t" id="t91" style='left:815.9px;top:108.71px;font:400 9.6px/13px "Liberation Sans", sans-serif;color:#a9a9a9;transform-origin:0 50%;transform:scaleX(0.9143);'>web</span>
<svg style="left:836px;top:112.39999999999999px" width="4.4" height="6.8" viewBox="0 0 4.4 6.8"><path d="M0.6 0.5 L3.8 3.4 L0.6 6.3" fill="none" stroke="#8a8a8a" stroke-width="1.05"/></svg>
<span class="t" id="t92" style='left:848.8000000000001px;top:108.41px;font:700 10.6px/15px "Liberation Sans", sans-serif;color:#d63b4c;'>J</span>
<span class="t" id="t93" style='left:860.6px;top:108.71px;font:400 9.6px/13px "Liberation Sans", sans-serif;color:#a9a9a9;transform-origin:0 50%;transform:scaleX(0.9885);'>AuthorizationConfig.java</span>
<svg style="left:967.4px;top:112.39999999999999px" width="4.4" height="6.8" viewBox="0 0 4.4 6.8"><path d="M0.6 0.5 L3.8 3.4 L0.6 6.3" fill="none" stroke="#8a8a8a" stroke-width="1.05"/></svg>
<span class="t" id="t94" style='left:975.8px;top:108.71px;font:400 9.6px/13px "Liberation Sans", sans-serif;color:#c8c8c8;transform-origin:0 50%;transform:scaleX(1.3703);'>{}</span>
<span class="t" id="t95" style='left:989.2px;top:108.71px;font:400 9.6px/13px "Liberation Sans", sans-serif;color:#a9a9a9;transform-origin:0 50%;transform:scaleX(0.9907);'>vikingbank.web</span>
<div class="b" style="left:736.4px;top:123.6px;width:550px;height:13.5px;border:1.2px solid #2b2b2b;"></div>
<span class="t" id="t96" style='left:712.19px;top:124.76px;font:400 9.36px/13px "Liberation Mono", monospace;color:#c6c6c6;'>1</span>
<span class="t" id="t97" style='left:712.19px;top:138.63px;font:400 9.36px/13px "Liberation Mono", monospace;color:#858585;'>2</span>
<span class="t" id="t98" style='left:712.19px;top:152.49px;font:400 9.36px/13px "Liberation Mono", monospace;color:#858585;'>3</span>
<span class="t" id="t99" style='left:712.19px;top:166.37px;font:400 9.36px/13px "Liberation Mono", monospace;color:#858585;'>4</span>
<span class="t" id="t100" style='left:712.19px;top:180.24px;font:400 9.36px/13px "Liberation Mono", monospace;color:#858585;'>5</span>
<span class="t" id="t101" style='left:712.19px;top:194.10px;font:400 9.36px/13px "Liberation Mono", monospace;color:#858585;'>6</span>
<span class="t" id="t102" style='left:712.19px;top:207.98px;font:400 9.36px/13px "Liberation Mono", monospace;color:#858585;'>7</span>
<span class="t" id="t103" style='left:712.19px;top:221.85px;font:400 9.36px/13px "Liberation Mono", monospace;color:#858585;'>8</span>
<span class="t" id="t104" style='left:712.19px;top:235.71px;font:400 9.36px/13px "Liberation Mono", monospace;color:#858585;'>9</span>
<span class="t" id="t105" style='left:706.57px;top:249.59px;font:400 9.36px/13px "Liberation Mono", monospace;color:#858585;letter-spacing:0.011px;'>10</span>
<span class="t" id="t106" style='left:706.57px;top:263.46px;font:400 9.36px/13px "Liberation Mono", monospace;color:#858585;letter-spacing:0.011px;'>11</span>
<span class="t" id="t107" style='left:706.57px;top:277.32px;font:400 9.36px/13px "Liberation Mono", monospace;color:#858585;letter-spacing:0.011px;'>12</span>
<span class="t" id="t108" style='left:706.57px;top:291.20px;font:400 9.36px/13px "Liberation Mono", monospace;color:#858585;letter-spacing:0.011px;'>13</span>
<span class="t" id="t109" style='left:706.57px;top:305.07px;font:400 9.36px/13px "Liberation Mono", monospace;color:#858585;letter-spacing:0.011px;'>14</span>
<span class="t" id="t110" style='left:706.57px;top:318.93px;font:400 9.36px/13px "Liberation Mono", monospace;color:#858585;letter-spacing:0.011px;'>15</span>
<span class="t" id="t111" style='left:706.57px;top:332.81px;font:400 9.36px/13px "Liberation Mono", monospace;color:#858585;letter-spacing:0.011px;'>16</span>
<span class="t" id="t112" style='left:706.57px;top:346.68px;font:400 9.36px/13px "Liberation Mono", monospace;color:#858585;letter-spacing:0.011px;'>17</span>
<span class="t" id="t113" style='left:706.57px;top:360.54px;font:400 9.36px/13px "Liberation Mono", monospace;color:#858585;letter-spacing:0.011px;'>18</span>
<span class="t" id="t114" style='left:706.57px;top:374.42px;font:400 9.36px/13px "Liberation Mono", monospace;color:#858585;letter-spacing:0.011px;'>19</span>
<span class="t" id="t115" style='left:706.57px;top:388.29px;font:400 9.36px/13px "Liberation Mono", monospace;color:#858585;letter-spacing:0.011px;'>20</span>
<span class="t" id="t116" style='left:736.6px;top:124.76px;font:400 9.36px/13px "Liberation Mono", monospace;color:#569cd6;letter-spacing:0.006px;'>package</span>
<span class="t" id="t117" style='left:781.52px;top:124.76px;font:400 9.36px/13px "Liberation Mono", monospace;color:#d4d4d4;letter-spacing:0.007px;'>vikingbank.web;</span>
<span class="t" id="t118" style='left:736.6px;top:152.49px;font:400 9.36px/13px "Liberation Mono", monospace;color:#569cd6;letter-spacing:0.007px;'>import</span>
<span class="t" id="t119" style='left:775.9px;top:152.49px;font:400 9.36px/13px "Liberation Mono", monospace;color:#d4d4d4;letter-spacing:0.007px;'>org.springframework.context.annotation.Bean;</span>
<span class="t" id="t120" style='left:736.6px;top:166.37px;font:400 9.36px/13px "Liberation Mono", monospace;color:#569cd6;letter-spacing:0.007px;'>import</span>
<span class="t" id="t121" style='left:775.9px;top:166.37px;font:400 9.36px/13px "Liberation Mono", monospace;color:#d4d4d4;letter-spacing:0.007px;'>org.springframework.context.annotation.Configuration;</span>
<span class="t" id="t122" style='left:736.6px;top:180.24px;font:400 9.36px/13px "Liberation Mono", monospace;color:#569cd6;letter-spacing:0.007px;'>import</span>
<span class="t" id="t123" style='left:775.9px;top:180.24px;font:400 9.36px/13px "Liberation Mono", monospace;color:#d4d4d4;letter-spacing:0.007px;'>org.springframework.security.config.Customizer;</span>
<span class="t" id="t124" style='left:736.6px;top:194.10px;font:400 9.36px/13px "Liberation Mono", monospace;color:#569cd6;letter-spacing:0.007px;'>import</span>
<span class="t" id="t125" style='left:775.9px;top:194.10px;font:400 9.36px/13px "Liberation Mono", monospace;color:#d4d4d4;letter-spacing:0.007px;'>org.springframework.security.config.annotation.web.builders.HttpSecurity;</span>
<span class="t" id="t126" style='left:736.6px;top:207.98px;font:400 9.36px/13px "Liberation Mono", monospace;color:#569cd6;letter-spacing:0.007px;'>import</span>
<span class="t" id="t127" style='left:775.9px;top:207.98px;font:400 9.36px/13px "Liberation Mono", monospace;color:#d4d4d4;letter-spacing:0.007px;'>org.springframework.security.config.annotation.web.configuration.EnableWebSecurity;</span>
<span class="t" id="t128" style='left:736.6px;top:221.85px;font:400 9.36px/13px "Liberation Mono", monospace;color:#569cd6;letter-spacing:0.007px;'>import</span>
<span class="t" id="t129" style='left:775.9px;top:221.85px;font:400 9.36px/13px "Liberation Mono", monospace;color:#d4d4d4;letter-spacing:0.007px;'>org.springframework.security.web.SecurityFilterChain;</span>
<span class="t" id="t130" style='left:736.6px;top:249.59px;font:400 9.36px/13px "Liberation Mono", monospace;color:#d4d4d4;'>@</span>
<span class="t" id="t131" style='left:742.21px;top:249.59px;font:400 9.36px/13px "Liberation Mono", monospace;color:#4ec9b0;letter-spacing:0.007px;'>Configuration</span>
<span class="t" id="t132" style='left:736.6px;top:263.46px;font:400 9.36px/13px "Liberation Mono", monospace;color:#d4d4d4;'>@</span>
<span class="t" id="t133" style='left:742.21px;top:263.46px;font:400 9.36px/13px "Liberation Mono", monospace;color:#4ec9b0;letter-spacing:0.008px;'>EnableWebSecurity</span>
<span class="t" id="t134" style='left:736.6px;top:277.32px;font:400 9.36px/13px "Liberation Mono", monospace;color:#569cd6;letter-spacing:0.007px;'>public class</span>
<span class="t" id="t135" style='left:809.59px;top:277.32px;font:400 9.36px/13px "Liberation Mono", monospace;color:#4ec9b0;letter-spacing:0.007px;'>AuthorizationConfig</span>
<span class="t" id="t136" style='left:921.88px;top:277.32px;font:400 9.36px/13px "Liberation Mono", monospace;color:#ffd700;'>{</span>
<span class="t" id="t137" style='left:759.06px;top:291.20px;font:400 9.36px/13px "Liberation Mono", monospace;color:#d4d4d4;'>@</span>
<span class="t" id="t138" style='left:764.67px;top:291.20px;font:400 9.36px/13px "Liberation Mono", monospace;color:#4ec9b0;letter-spacing:0.008px;'>Bean</span>
<span class="t" id="t139" style='left:759.06px;top:305.07px;font:400 9.36px/13px "Liberation Mono", monospace;color:#569cd6;letter-spacing:0.007px;'>public</span>
<span class="t" id="t140" style='left:798.36px;top:305.07px;font:400 9.36px/13px "Liberation Mono", monospace;color:#4ec9b0;letter-spacing:0.007px;'>SecurityFilterChain</span>
<span class="t" id="t141" style='left:910.65px;top:305.07px;font:400 9.36px/13px "Liberation Mono", monospace;color:#dcdcaa;letter-spacing:0.007px;'>securityFilterChain</span>
<span class="t" id="t142" style='left:1017.33px;top:305.07px;font:400 9.36px/13px "Liberation Mono", monospace;color:#da70d6;'>(</span>
<span class="t" id="t143" style='left:1022.94px;top:305.07px;font:400 9.36px/13px "Liberation Mono", monospace;color:#4ec9b0;letter-spacing:0.007px;'>HttpSecurity</span>
<span class="t" id="t144" style='left:1095.93px;top:305.07px;font:400 9.36px/13px "Liberation Mono", monospace;color:#9cdcfe;letter-spacing:0.008px;'>http</span>
<span class="t" id="t145" style='left:1118.39px;top:305.07px;font:400 9.36px/13px "Liberation Mono", monospace;color:#da70d6;'>)</span>
<span class="t" id="t146" style='left:1129.62px;top:305.07px;font:400 9.36px/13px "Liberation Mono", monospace;color:#569cd6;letter-spacing:0.005px;'>throws</span>
<span class="t" id="t147" style='left:1168.92px;top:305.07px;font:400 9.36px/13px "Liberation Mono", monospace;color:#4ec9b0;letter-spacing:0.008px;'>Exception</span>
<span class="t" id="t148" style='left:1225.06px;top:305.07px;font:400 9.36px/13px "Liberation Mono", monospace;color:#da70d6;'>{</span>
<span class="t" id="t149" style='left:781.52px;top:318.93px;font:400 9.36px/13px "Liberation Mono", monospace;color:#9cdcfe;letter-spacing:0.004px;'>http</span>
<span class="t" id="t150" style='left:803.97px;top:318.93px;font:400 9.36px/13px "Liberation Mono", monospace;color:#d4d4d4;'>.</span>
<span class="t" id="t151" style='left:809.59px;top:318.93px;font:400 9.36px/13px "Liberation Mono", monospace;color:#dcdcaa;letter-spacing:0.008px;'>formLogin</span>
<span class="t" id="t152" style='left:860.12px;top:318.93px;font:400 9.36px/13px "Liberation Mono", monospace;color:#179fff;'>(</span>
<span class="t" id="t153" style='left:865.73px;top:318.93px;font:400 9.36px/13px "Liberation Mono", monospace;color:#9cdcfe;letter-spacing:0.008px;'>Customizer</span>
<span class="t" id="t154" style='left:921.88px;top:318.93px;font:400 9.36px/13px "Liberation Mono", monospace;color:#d4d4d4;'>.</span>
<span class="t" id="t155" style='left:927.49px;top:318.93px;font:400 9.36px/13px "Liberation Mono", monospace;color:#dcdcaa;letter-spacing:0.008px;'>withDefaults</span>
<span class="t" id="t156" style='left:994.87px;top:318.93px;font:400 9.36px/13px "Liberation Mono", monospace;color:#ffd700;letter-spacing:0.011px;'>()</span>
<span class="t" id="t157" style='left:1006.1px;top:318.93px;font:400 9.36px/13px "Liberation Mono", monospace;color:#179fff;'>)</span>
<span class="t" id="t158" style='left:1011.71px;top:318.93px;font:400 9.36px/13px "Liberation Mono", monospace;color:#d4d4d4;'>;</span>
<span class="t" id="t159" style='left:781.52px;top:346.68px;font:400 9.36px/13px "Liberation Mono", monospace;color:#c586c0;letter-spacing:0.005px;'>return</span>
<span class="t" id="t160" style='left:820.82px;top:346.68px;font:400 9.36px/13px "Liberation Mono", monospace;color:#9cdcfe;letter-spacing:0.007px;'>http</span>
<span class="t" id="t161" style='left:843.28px;top:346.68px;font:400 9.36px/13px "Liberation Mono", monospace;color:#d4d4d4;'>.</span>
<span class="t" id="t162" style='left:848.89px;top:346.68px;font:400 9.36px/13px "Liberation Mono", monospace;color:#dcdcaa;letter-spacing:0.006px;'>build</span>
<span class="t" id="t163" style='left:876.96px;top:346.68px;font:400 9.36px/13px "Liberation Mono", monospace;color:#179fff;letter-spacing:0.011px;'>()</span>
<span class="t" id="t164" style='left:888.19px;top:346.68px;font:400 9.36px/13px "Liberation Mono", monospace;color:#d4d4d4;'>;</span>
<span class="t" id="t165" style='left:759.06px;top:360.54px;font:400 9.36px/13px "Liberation Mono", monospace;color:#da70d6;'>}</span>
<span class="t" id="t166" style='left:736.6px;top:374.42px;font:400 9.36px/13px "Liberation Mono", monospace;color:#ffd700;'>}</span>
<svg style="left:735px;top:288px" width="4" height="87" viewBox="735 288 4 87"><rect x="736.4" y="289.805" width="0.8" height="83.22" fill="#404040"/></svg>
<svg style="left:757px;top:316px" width="4" height="45" viewBox="757 316 4 45"><rect x="758.9" y="317.545" width="0.8" height="41.61" fill="#404040"/></svg>
<svg style="left:739px;top:137.8px" width="7.6" height="10.4" viewBox="0 0 7.6 10.4"><circle cx="3.8" cy="3.7" r="3.6" fill="#ffcc00"/><rect x="2.3" y="6.4" width="3" height="3.6" rx="0.6" fill="#ddb100"/><rect x="3.1" y="7.4" width="1.4" height="1.6" fill="#5c7a1e"/></svg>
<svg style="left:432px;top:658px" width="849" height="17" viewBox="432 658 849 17"><rect x="433" y="659" width="847" height="15" fill="#007acc"/></svg>
<svg style="left:432px;top:658px" width="27" height="17" viewBox="432 658 27 17"><rect x="433" y="659" width="24.4" height="15" fill="#16825d"/></svg>
<svg style="left:440.6px;top:662.8px" width="8.4" height="8" viewBox="0 0 8.4 8" fill="none" stroke="#fff" stroke-width="0.9"><path d="M0.4 1.6 L3 4.2 L0.4 6.8"/><path d="M8 0.4 L5.4 3 L8 5.6" transform="translate(0 -0.2)"/></svg>
<svg style="left:462.4px;top:661.6px" width="8" height="11.4" viewBox="0 0 8 11.4" fill="none" stroke="#fff" stroke-width="0.85"><circle cx="1.9" cy="1.9" r="1.3"/><circle cx="1.9" cy="9.5" r="1.3"/><circle cx="6.1" cy="3.6" r="1.3"/><path d="M1.9 3.2 V8.2 M6.1 4.9 C6.1 7 1.9 6.4 1.9 8.2"/></svg>
<span class="t" id="t167" style='left:474.9px;top:661.71px;font:400 8.8px/12px "Liberation Sans", sans-serif;color:#ffffff;transform-origin:0 50%;transform:scaleX(0.9645);'>main</span>
<svg style="left:498.4px;top:663.6px" width="9.8" height="7.4" viewBox="0 0 9.8 7.4" fill="none" stroke="#fff" stroke-width="0.85"><path d="M2.6 6 A2.1 2.1 0 0 1 2.4 1.9 A2.8 2.8 0 0 1 7.6 2.4 A1.9 1.9 0 0 1 7.4 6"/><path d="M4.9 7 V3.6 M3.6 4.8 L4.9 3.5 L6.2 4.8"/></svg>
<svg style="left:518.6px;top:663px" width="9.2" height="9.2" viewBox="0 0 9.2 9.2" fill="none" stroke="#fff" stroke-width="0.85"><circle cx="4.6" cy="4.6" r="4"/><path d="M3 3 L6.2 6.2 M6.2 3 L3 6.2"/></svg>
<span class="t" id="t168" style='left:530.8px;top:661.71px;font:400 8.8px/12px "Liberation Sans", sans-serif;color:#ffffff;transform-origin:0 50%;transform:scaleX(0.9580);'>0</span>
<svg style="left:538.6px;top:663px" width="9.4" height="9" viewBox="0 0 9.4 9" fill="none" stroke="#fff" stroke-width="0.85" stroke-linejoin="round"><path d="M4.7 0.8 L8.9 8.4 H0.5 Z"/><path d="M4.7 3.6 V5.8 M4.7 6.8 V7.2"/></svg>
<span class="t" id="t169" style='left:551.3px;top:661.71px;font:400 8.8px/12px "Liberation Sans", sans-serif;color:#ffffff;transform-origin:0 50%;transform:scaleX(0.9172);'>0</span>
<svg style="left:567.4px;top:662.6px" width="10.4" height="9.8" viewBox="0 0 10.4 9.8" fill="none" stroke="#fff" stroke-width="0.85"><path d="M5.2 4 L2.6 9.6 M5.2 4 L7.8 9.6 M3.6 7.4 H6.8"/><circle cx="5.2" cy="3.2" r="0.9"/><path d="M2.6 0.6 A3.6 3.6 0 0 0 2.6 5.8 M7.8 0.6 A3.6 3.6 0 0 1 7.8 5.8 M1 0 A5 5 0 0 0 1 6.4 M9.4 0 A5 5 0 0 1 9.4 6.4" stroke-width="0.7"/></svg>
<span class="t" id="t170" style='left:579.8px;top:661.71px;font:400 8.8px/12px "Liberation Sans", sans-serif;color:#ffffff;transform-origin:0 50%;transform:scaleX(0.9783);'>0</span>
<span class="t" id="t171" style='left:1180.5px;top:662.01px;font:400 8.8px/12px "Liberation Sans", sans-serif;color:#ffffff;transform-origin:0 50%;transform:scaleX(0.9331);'>Ln 1, Col 1</span>
<span class="t" id="t172" style='left:1232.8px;top:662.01px;font:400 8.8px/12px "Liberation Sans", sans-serif;color:#ffffff;transform-origin:0 50%;transform:scaleX(0.8869);'>Spaces: 4</span>
</body></html>
